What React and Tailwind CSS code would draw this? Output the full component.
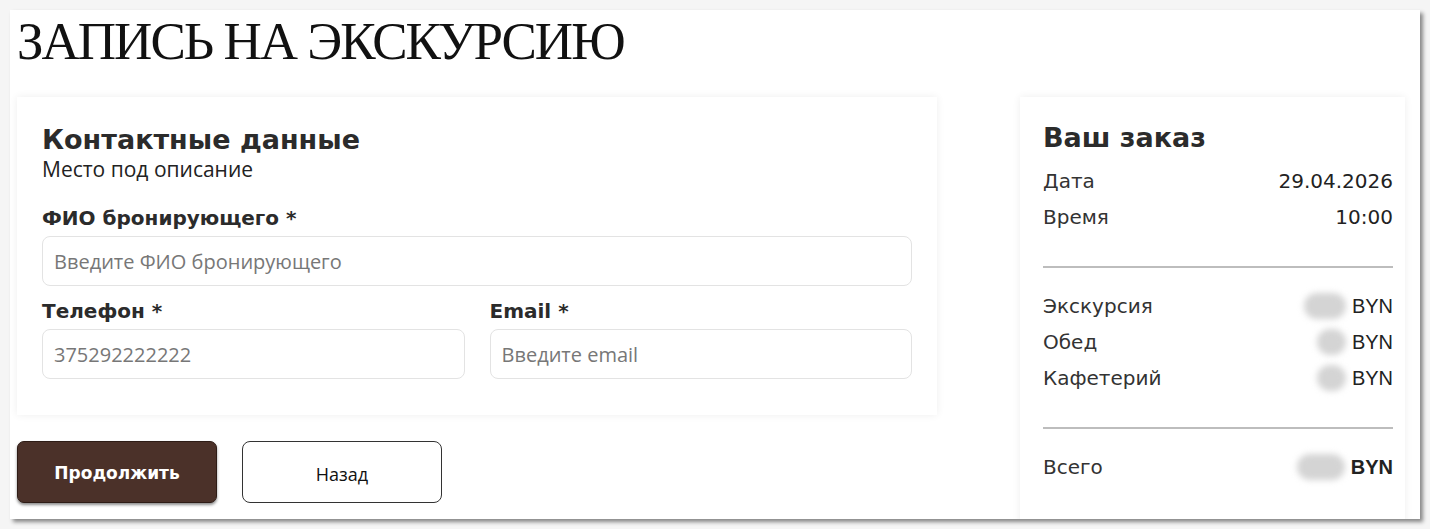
import React from "react";

const sans = "font-['DejaVu_Sans',Verdana,sans-serif]";
const open = "font-['Open_Sans',sans-serif]";

const Blur = ({ w }) => (
  <span
    className="inline-block h-[26px] rounded-full bg-[#d4d4d4] blur-[3px]"
    style={{ width: w }}
  />
);

const Row = ({ label, value, blur, bold }) => (
  <div className="flex items-center justify-between leading-[36px]">
    <span>{label}</span>
    {blur ? (
      <span className="flex items-center gap-[6px]">
        <Blur w={blur} />
        <span
          className={`font-['Liberation_Sans',Arial,sans-serif] text-[#222] ${
            bold ? "font-bold" : ""
          }`}
        >
          BYN
        </span>
      </span>
    ) : (
      <span className="text-[#222]">{value}</span>
    )}
  </div>
);

const Field = ({ label, placeholder, className = "" }) => (
  <div className={className}>
    <label className={`block ${sans} text-[20px] leading-[24px] font-bold text-[#2b2b2b]`}>
      {label}
    </label>
    <input
      type="text"
      placeholder={placeholder}
      className={`mt-[6px] block h-[50px] w-full rounded-[8px] border border-[#e3e3e3] bg-white px-[11px] ${open} text-[20px] text-[#333] placeholder:text-[#777] outline-none`}
    />
  </div>
);

export default function App() {
  return (
    <div className="h-[529px] overflow-hidden bg-[#f5f5f5] pt-[10px] pl-[10px] pr-[10px]">
      <div className="relative h-[509px] overflow-hidden bg-white pl-[7px] pr-[15px] shadow-[3px_3px_4px_rgba(0,0,0,0.45)]">
        <h1 className="pt-[5px] font-['Liberation_Serif','Times_New_Roman',serif] text-[53px] leading-[53px] tracking-[-2px] text-[#111]">
          ЗАПИСЬ НА ЭКСКУРСИЮ
        </h1>

        <div className="mt-[29px] flex justify-between">
          {/* форма */}
          <div className="w-[920px]">
            <div className="bg-white px-[25px] pt-[27px] pb-[36px] shadow-[0_0_8px_rgba(0,0,0,0.07)]">
              <h2 className={`${sans} text-[27px] leading-[31px] font-bold text-[#2b2b2b]`}>
                Контактные данные
              </h2>
              <p className={`mt-[2px] ${open} text-[21px] leading-[24px] text-[#222]`}>
                Место под описание
              </p>

              <Field
                className="mt-[25px]"
                label="ФИО бронирующего *"
                placeholder="Введите ФИО бронирующего"
              />

              <div className="mt-[13px] grid grid-cols-2 gap-[25px]">
                <Field label="Телефон *" placeholder="375292222222" />
                <Field label="Email *" placeholder="Введите email" />
              </div>
            </div>

            <div className="mt-[26px] flex gap-[25px]">
              <button className="h-[62px] w-[200px] rounded-[7px] border border-[#2e1c16] bg-[#4b3129] pt-[4px] font-['DejaVu_Sans',Verdana,sans-serif] text-[17px] font-bold text-white shadow-[0_2px_3px_rgba(0,0,0,0.45)]">
                Продолжить
              </button>
              <button className={`h-[62px] w-[200px] rounded-[8px] border border-[#333] bg-white pt-[4px] ${open} text-[18px] text-[#111]`}>
                Назад
              </button>
            </div>
          </div>

          {/* заказ */}
          <div className="h-[440px] w-[385px] bg-white pl-[23px] pr-[12px] pt-[24px] shadow-[0_0_8px_rgba(0,0,0,0.07)]">
            <h2 className={`${sans} text-[27px] leading-[34px] font-bold text-[#2b2b2b]`}>
              Ваш заказ
            </h2>
            <div className={`mt-[8px] ${sans} text-[20px] text-[#333]`}>
              <Row label="Дата" value="29.04.2026" />
              <Row label="Время" value="10:00" />
              <div className="mt-[31px] mb-[20px] h-[2px] bg-[#bdbdbd]" />
              <Row label="Экскурсия" blur={42} />
              <Row label="Обед" blur={29} />
              <Row label="Кафетерий" blur={29} />
              <div className="mt-[31px] mb-[20px] h-[2px] bg-[#bdbdbd]" />
              <Row label="Всего" blur={48} bold />
            </div>
          </div>
        </div>
      </div>
    </div>
  );
}
